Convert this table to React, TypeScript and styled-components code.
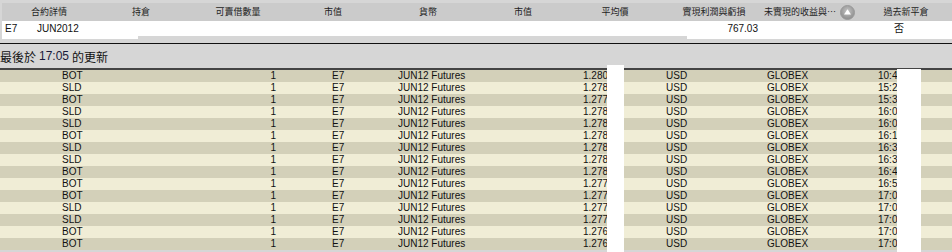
import styled, { createGlobalStyle } from "styled-components";
import { FC } from "react";

const GlobalStyle = createGlobalStyle`
  html, body {
    margin: 0;
    padding: 0;
    background: #d6d6d6;
  }
  body {
    font-family: "Liberation Sans", "Noto Sans CJK TC", sans-serif;
    color: #111;
  }
`;

const Page = styled.div`
  position: relative;
  width: 952px;
  height: 252px;
  overflow: hidden;
  padding-top: 3px;
  box-sizing: border-box;
  background: #d6d6d6;
`;

const HeaderBar = styled.div`
  display: grid;
  grid-template-columns: 94px 90px 104px 86px 104px 86px 98px 100px 96px 1fr;
  margin-left: 2px;
  height: 18px;
  background: #cbcbcb;
  align-items: center;
`;

const HeadCell = styled.div<{ $left?: boolean }>`
  display: flex;
  align-items: center;
  justify-content: ${(p) => (p.$left ? "flex-start" : "center")};
  font-size: 9px;
  line-height: 18px;
  color: #1e1e1e;
  white-space: nowrap;
  font-family: "Noto Sans CJK TC", "Liberation Sans", sans-serif;
`;

const SortIcon = styled.svg`
  margin-left: 4px;
  flex: none;
`;

const SummaryRow = styled.div`
  display: flex;
  align-items: flex-start;
  margin-left: 2px;
  height: 22px;
`;

const WhiteBlock = styled.div<{ $w?: number; $h: number }>`
  display: flex;
  align-items: flex-start;
  background: #fff;
  height: ${(p) => p.$h}px;
  width: ${(p) => (p.$w ? `${p.$w}px` : "auto")};
  flex: ${(p) => (p.$w ? "none" : "1")};
  font-size: 10px;
  line-height: 15px;
`;

const SumText = styled.span<{ $w: number; $pad?: number; $align?: string }>`
  width: ${(p) => p.$w}px;
  padding-left: ${(p) => p.$pad ?? 0}px;
  text-align: ${(p) => p.$align ?? "left"};
  box-sizing: border-box;
  white-space: nowrap;
`;

const Rule = styled.div`
  height: 1px;
  background: #111;
`;

const Status = styled.div`
  height: 24px;
  display: flex;
  align-items: center;
  font-size: 12px;
  color: #111;
  font-family: "Noto Sans CJK TC", "Liberation Sans", sans-serif;
`;

const Time = styled.span`
  font-family: "Liberation Sans", sans-serif;
  color: #1a1a3a;
  margin: 0 3px;
`;

const TableTop = styled.div`
  height: 2px;
  background: #444;
`;

const Row = styled.div<{ $odd: boolean }>`
  display: grid;
  grid-template-columns: 150px 66px 120px 185px 83px 101px 111px 1fr;
  padding-left: 62px;
  height: 12px;
  font-size: 10px;
  line-height: 12px;
  background: ${(p) => (p.$odd ? "#f0edd6" : "#d3d0b9")};
  white-space: nowrap;
`;

const Cell = styled.div<{ $right?: boolean; $pad?: number }>`
  text-align: ${(p) => (p.$right ? "right" : "left")};
  padding-left: ${(p) => p.$pad ?? 0}px;
  padding-right: ${(p) => (p.$right ? 2 : 0)}px;
  overflow: hidden;
`;

const Mask = styled.div<{ $x: number; $y: number; $w: number }>`
  position: absolute;
  left: ${(p) => p.$x}px;
  top: ${(p) => p.$y}px;
  width: ${(p) => p.$w}px;
  bottom: 0;
  background: #fff;
`;

const headers = [
  "合約詳情",
  "持倉",
  "可賣借數量",
  "市值",
  "貨幣",
  "市值",
  "平均價",
  "實現利潤與虧損",
];

const trades: [string, string, string][] = [
  ["BOT", "1.2805", "10:47"],
  ["SLD", "1.2785", "15:22"],
  ["BOT", "1.2775", "15:31"],
  ["SLD", "1.2785", "16:02"],
  ["SLD", "1.2785", "16:05"],
  ["BOT", "1.2785", "16:12"],
  ["SLD", "1.2785", "16:31"],
  ["SLD", "1.2785", "16:38"],
  ["BOT", "1.2785", "16:44"],
  ["BOT", "1.2775", "16:52"],
  ["BOT", "1.2775", "17:01"],
  ["SLD", "1.2775", "17:02"],
  ["SLD", "1.2775", "17:03"],
  ["BOT", "1.2765", "17:04"],
  ["BOT", "1.2765", "17:05"],
];

const UpIcon: FC = () => (
  <SortIcon width="15" height="15" viewBox="0 0 15 15">
    <defs>
      <radialGradient id="g" cx="50%" cy="40%" r="60%">
        <stop offset="0%" stopColor="#c4c4c4" />
        <stop offset="100%" stopColor="#8c8c8c" />
      </radialGradient>
    </defs>
    <circle cx="7.5" cy="7.5" r="7" fill="url(#g)" stroke="#9a9a9a" />
    <path d="M7.5 4.2 L11 9.6 L4 9.6 Z" fill="#fff" />
  </SortIcon>
);

const App: FC = () => {
  return (
    <>
      <GlobalStyle />
      <Page>
        <HeaderBar>
          {headers.map((h, i) => (
            <HeadCell key={i}>{h}</HeadCell>
          ))}
          <HeadCell $left>
            未實現的收益與…
            <UpIcon />
          </HeadCell>
          <HeadCell>過去新平倉</HeadCell>
        </HeaderBar>
        <SummaryRow>
          <WhiteBlock $w={136} $h={18}>
            <SumText $w={35} $pad={3}>E7</SumText>
            <SumText $w={60}>JUN2012</SumText>
          </WhiteBlock>
          <WhiteBlock $w={549} $h={15} />
          <WhiteBlock $h={18}>
            <SumText $w={71} $align="right">767.03</SumText>
            <SumText $w={146} $align="right">否</SumText>
          </WhiteBlock>
        </SummaryRow>
        <Rule />
        <Status>
          最後於<Time>17:05</Time>的更新
        </Status>
        <TableTop />
        {trades.map(([side, price, time], i) => (
          <Row key={i} $odd={i % 2 === 1}>
            <Cell>{side}</Cell>
            <Cell $right>1</Cell>
            <Cell $pad={54}>E7</Cell>
            <Cell>JUN12 Futures</Cell>
            <Cell>{price}</Cell>
            <Cell>USD</Cell>
            <Cell>GLOBEX</Cell>
            <Cell>{time}</Cell>
          </Row>
        ))}
        <Mask $x={607} $y={65} $w={17} />
        <Mask $x={897} $y={69} $w={24} />
      </Page>
    </>
  );
};

export default App;
